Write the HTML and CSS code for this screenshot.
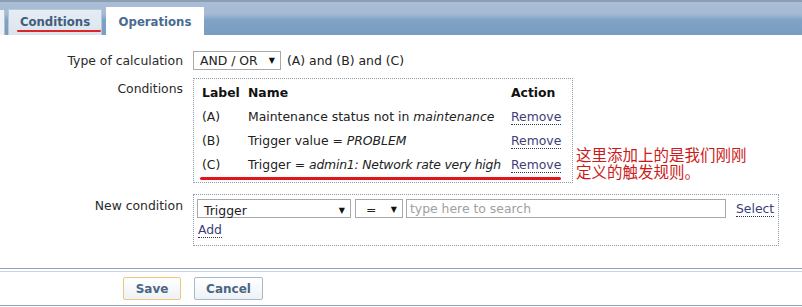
FILE: index.html
```html
<!DOCTYPE html>
<html>
<head>
<meta charset="utf-8">
<link rel="stylesheet" href="styles.css">
</head>
<body>
<div class="tabbar">
  <div class="tab-stub"></div>
  <div class="tab tab-active"><span class="tab-label">Conditions</span><span class="tab-mark"></span></div>
  <div class="tab tab-plain"><span class="tab-label">Operations</span></div>
</div>
<div class="form">
  <div class="row row-calc">
    <div class="lbl">Type of calculation</div>
    <div class="field calc">
      <div class="sel sel-calc"><span>AND / OR</span><span class="arrow">&#9660;</span></div>
      <span class="formula">(A) and (B) and (C)</span>
    </div>
  </div>
  <div class="row row-cond">
    <div class="lbl lbl-top">Conditions</div>
    <div class="field cond-field">
      <div class="box cond-box">
        <table class="ctable">
          <thead>
            <tr><th class="c-lbl">Label</th><th class="c-name">Name</th><th class="c-act">Action</th></tr>
          </thead>
          <tbody>
            <tr><td>(A)</td><td>Maintenance status not in <i>maintenance</i></td><td><a class="lnk">Remove</a></td></tr>
            <tr><td>(B)</td><td>Trigger value = <i>PROBLEM</i></td><td><a class="lnk">Remove</a></td></tr>
            <tr><td>(C)</td><td>Trigger = <i class="tight">admin1: Network rate very high</i></td><td><a class="lnk">Remove</a></td></tr>
          </tbody>
        </table>
        <span class="red-line"></span>
      </div>
      <div class="note">
        <div class="note-line">这里添加上的是我们刚刚</div>
        <div class="note-line">定义的触发规则。</div>
      </div>
    </div>
  </div>
  <div class="row row-new">
    <div class="lbl lbl-top2">New condition</div>
    <div class="field">
      <div class="box new-box">
        <div class="new-line">
          <div class="sel sel-trig"><span class="sel-txt">Trigger</span><span class="arrow">&#9660;</span></div>
          <div class="sel sel-op"><span class="sel-txt">=</span><span class="arrow">&#9660;</span></div>
          <div class="search">type here to search</div>
          <a class="lnk sel-link">Select</a>
        </div>
        <a class="lnk add-link">Add</a>
      </div>
    </div>
  </div>
</div>
<div class="footer">
  <button class="btn btn-save">Save</button>
  <button class="btn btn-cancel">Cancel</button>
</div>
</body>
</html>
```
FILE: styles.css
```css
html, body {
  margin: 0;
  padding: 0;
  background: #ffffff;
}
body {
  width: 802px;
  height: 307px;
  overflow: hidden;
  font-family: "DejaVu Sans", Verdana, sans-serif;
  font-size: 12.4px;
  color: #222222;
}
.tabbar {
  height: 33px;
  border-top: 2px solid #8c9fb1;
  background: linear-gradient(#a9bed6 0px, #a6bbd3 12px, #7fa2c5 18px, #799dc1 33px);
  display: flex;
  align-items: flex-end;
}
.tab-stub {
  width: 4px;
  height: 25px;
  background: #eef2f6;
  border-right: 1px solid #b3c3d3;
}
.tab {
  box-sizing: border-box;
  display: flex;
  align-items: center;
  justify-content: center;
  position: relative;
  font-weight: bold;
  font-size: 11.7px;
}
.tab-active {
  margin-left: 3px;
  width: 94px;
  height: 26px;
  background: linear-gradient(#e6edf4, #dbe4ed);
  border: 1px solid #b8c8d8;
  border-bottom: none;
  color: #415d7b;
}
.tab-plain {
  margin-left: 4px;
  width: 98px;
  height: 28px;
  background: #ffffff;
  color: #4a6b90;
}
.tab-active .tab-label {
  padding-bottom: 1px;
}
.tab-plain .tab-label {
  padding-top: 1px;
}
.tab-mark {
  position: absolute;
  left: 8px;
  right: 0;
  bottom: 3px;
  height: 2px;
  border-radius: 1px;
  background: #d8262a;
}
.form {
  padding-top: 16px;
  height: 217px;
}
.row {
  display: grid;
  grid-template-columns: 183px 1fr;
  column-gap: 10px;
}
.lbl {
  text-align: right;
  color: #2a2a2a;
}
.row-calc {
  height: 19px;
  align-items: center;
  margin-bottom: 8px;
}
.field.calc {
  display: flex;
  align-items: center;
  gap: 6px;
}
.sel {
  box-sizing: border-box;
  height: 19px;
  border: 1px solid #a9a9a9;
  background: #ffffff;
  display: flex;
  align-items: center;
  justify-content: space-between;
  padding: 0 5px 0 6px;
  color: #222;
}
.sel-calc {
  width: 88px;
}
.arrow {
  font-size: 8px;
  color: #111;
}
.lbl-top {
  padding-top: 3px;
}
.cond-field {
  display: flex;
  align-items: flex-end;
}
.box {
  border: 1px dotted #8e9aa8;
  box-sizing: border-box;
}
.cond-box {
  width: 380px;
  height: 105px;
  position: relative;
  padding: 1px 0 0 8px;
  flex: none;
}
.ctable {
  border-collapse: collapse;
}
.ctable th {
  font-weight: bold;
  text-align: left;
  height: 24px;
  padding: 0;
  color: #111;
}
.ctable td {
  height: 24px;
  padding: 0;
  white-space: nowrap;
}
.c-lbl { width: 46px; }
.c-name { width: 263px; }
.c-act { width: 55px; }
.tight {
  letter-spacing: -0.2px;
}
.lnk {
  color: #3d3d79;
  text-decoration: none;
  border-bottom: 1px dotted #333355;
  cursor: pointer;
}
.red-line {
  position: absolute;
  left: 6px;
  top: 98px;
  width: 361px;
  height: 3px;
  border-radius: 2px;
  background: #e0141a;
}
.note {
  margin-left: 3px;
  margin-bottom: 3px;
  font-family: "Noto Sans CJK SC", sans-serif;
  font-size: 15.5px;
  color: #cc1a1a;
  white-space: nowrap;
}
.note-line {
  height: 17px;
  line-height: 17px;
}
.row-new {
  margin-top: 11px;
}
.lbl-top2 {
  padding-top: 4px;
}
.new-box {
  width: 586px;
  height: 52px;
  padding: 4px 0 0 3px;
}
.new-line {
  display: flex;
  align-items: center;
  height: 19px;
}
.sel-trig {
  width: 154px;
  padding-top: 3px;
}
.sel-op {
  width: 48px;
  margin-left: 4px;
  padding-left: 10px;
  padding-top: 2px;
}
.search {
  box-sizing: border-box;
  margin-left: 3px;
  width: 320px;
  height: 19px;
  border: 1px solid #a9a9a9;
  color: #a0a0a0;
  padding: 0 0 0 3px;
  line-height: 17px;
}
.sel-link {
  margin-left: 10px;
}
.add-link {
  display: inline-block;
  margin-top: 5px;
  margin-left: 1px;
  line-height: 14px;
}
.footer {
  border-top: 1px solid #8ea3b8;
  border-bottom: 1px solid #8ea3b8;
  box-shadow: inset 0 2px 0 #ffffff, inset 0 3px 0 #c9d4df;
  height: 38px;
  box-sizing: border-box;
  display: flex;
  align-items: center;
  padding: 3px 0 0 123px;
  gap: 13px;
}
.btn {
  font-family: "DejaVu Sans", Verdana, sans-serif;
  font-weight: bold;
  font-size: 12px;
  height: 23px;
  border-radius: 2px;
  background: linear-gradient(#ffffff, #eef2f6);
  color: #4b6584;
  padding: 0;
}
.btn-save {
  width: 58px;
  border: 1px solid #f0c77a;
}
.btn-cancel {
  width: 69px;
  border: 1px solid #a7b8ca;
}
```
